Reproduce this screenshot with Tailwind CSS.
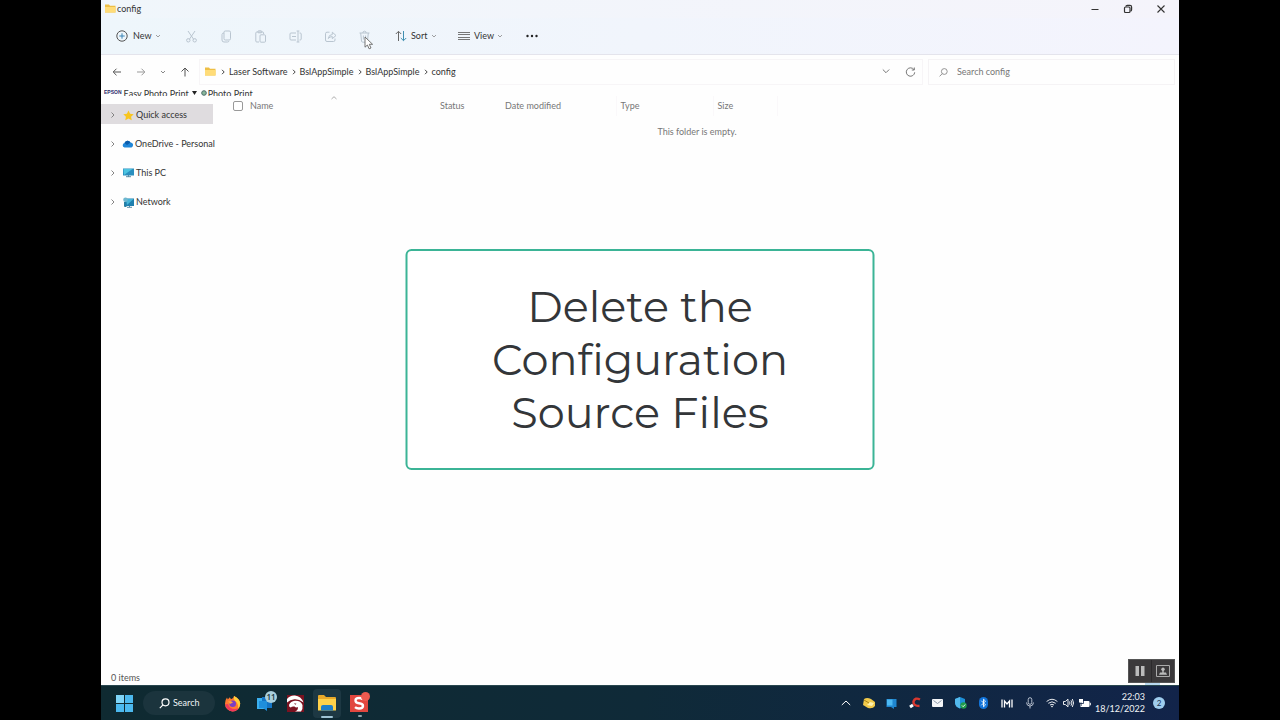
<!DOCTYPE html>
<html lang="en">
<head>
    <meta charset="UTF-8">
    <meta name="viewport" content="width=device-width, initial-scale=1.0">
    <title>config</title>
    <script src="https://cdn.jsdelivr.net/npm/@tailwindcss/browser@4"></script>
</head>
<body class="h-screen overflow-hidden bg-black px-[101px] font-['Segoe_UI','Lato',sans-serif] text-[9px] leading-3 text-[#333]">
    <div class="relative flex h-full flex-col bg-[#fefefe]">

        <!-- Title bar -->
        <header class="flex h-[18px] shrink-0 items-center bg-linear-to-r from-[#f0f6fb] to-[#f5f4fb]">
            <svg class="ml-1 h-[10px] w-[11px]" viewBox="0 0 11 10"><path d="M0 .5h4l1 1.200h5.500V8.500H0z" fill="#eebf45"/><path d="M0 3h10.500v5.500H0z" fill="#ffdc78"/></svg>
            <h1 class="ml-px">config</h1>
            <div class="mr-[2px] ml-auto flex h-full w-[99px]">
                <button class="grid flex-1 place-items-center" aria-label="Minimize"><svg class="size-[10px]" viewBox="0 0 10 10" stroke="#333"><path d="M1.500 5.500h7"/></svg></button>
                <button class="grid flex-1 place-items-center" aria-label="Restore"><svg class="size-[10px]" viewBox="0 0 10 10" fill="none" stroke="#333" stroke-width="1.200"><rect x="1.500" y="3" width="5.500" height="5.500" rx="1"/><path d="M3 2.600Q3 1.400 4.300 1.400H7Q8.600 1.400 8.600 3V5.700Q8.600 7 7.400 7"/></svg></button>
                <button class="grid flex-1 place-items-center" aria-label="Close"><svg class="size-[10px]" viewBox="0 0 10 10" stroke="#333" stroke-width="1.100"><path d="M1.500 1.500l7 7M8.500 1.500l-7 7"/></svg></button>
            </div>
        </header>

        <!-- Command bar -->
        <div class="flex h-[37px] shrink-0 items-center border-b border-[#e4e4ec] bg-linear-to-r from-[#eef6fb] to-[#f4f4fd] pl-[15px]">
            <button class="flex w-[58px] items-center">
                <svg class="size-[12px]" viewBox="0 0 12 12" fill="none" stroke="#555"><circle cx="6" cy="6" r="5.200"/><path d="M6 3.300v5.400M3.300 6h5.400" stroke="#3b84b5"/></svg>
                <span class="ml-[5px]">New</span>
                <svg class="ml-[3px] size-[6px]" viewBox="0 0 6 6" fill="none" stroke="#888" stroke-width=".8"><path d="M1 2l2 2 2-2"/></svg>
            </button>
            <div class="flex w-[208px] text-[#b9c5d0]">
                <button class="grid flex-1 place-items-center" aria-label="Cut"><svg class="size-[13px]" viewBox="0 0 13 13" fill="none" stroke="currentColor"><path d="M3 1l5.800 8.500M10 1L4.200 9.500"/><circle cx="3.300" cy="10.300" r="1.700"/><circle cx="9.700" cy="10.300" r="1.700"/></svg></button>
                <button class="grid flex-1 place-items-center" aria-label="Copy"><svg class="size-[13px]" viewBox="0 0 13 13" fill="none" stroke="currentColor"><rect x="4" y="1" width="6.500" height="9" rx="1.300"/><path d="M4 3Q2 3 2 4.500V10Q2 12 4 12H7.500Q8.600 12 9 11"/></svg></button>
                <button class="grid flex-1 place-items-center" aria-label="Paste"><svg class="size-[13px]" viewBox="0 0 13 13" fill="none" stroke="currentColor"><path d="M5 12H2.800Q1.800 12 1.800 11V3Q1.800 2 2.800 2H8.500Q9.600 2 9.600 3v1"/><rect x="3.800" y=".8" width="4" height="2" rx=".8"/><rect x="6" y="4.800" width="5.500" height="7.400" rx="1"/></svg></button>
                <button class="grid flex-1 place-items-center" aria-label="Rename"><svg class="size-[13px]" viewBox="0 0 13 13" fill="none" stroke="currentColor"><path d="M7 3H2Q1 3 1 4v5q0 1 1 1h5M10.500 3h.7q1 0 1 1v5q0 1-1 1h-.7M3 6.500h4M9 1v11M7.600 1h2.800M7.600 12h2.800"/></svg></button>
                <button class="grid flex-1 place-items-center" aria-label="Share"><svg class="size-[13px]" viewBox="0 0 13 13" fill="none" stroke="currentColor"><path d="M5.500 2.200H3q-1.500 0-1.500 1.500V10q0 1.500 1.500 1.500h6.500Q11 11.500 11 10V8.500"/><path d="M4.300 8.500Q4.700 4.700 8.300 4.500V2.200L12 5.500 8.300 8.700V6.600Q5.800 6.500 4.300 8.500z"/></svg></button>
                <button class="relative grid flex-1 place-items-center" aria-label="Delete">
                    <svg class="size-[13px]" viewBox="0 0 13 13" fill="none" stroke="currentColor"><path d="M1.500 3h10M4.800 3Q4.800 1.200 6.500 1.200T8.200 3M2.700 3l.8 8q.1 1.200 1.300 1.200h3.400q1.200 0 1.300-1.200l.8-8M5.400 5.500v4M7.600 5.500v4"/></svg>
                    <!-- mouse pointer -->
                    <svg class="absolute left-[17px] top-[6px] h-[14px] w-[10px]" viewBox="0 0 10 14"><path d="M1 1v10.200l2.400-2.200 1.700 3.800 1.900-.8-1.700-3.700h3.300z" fill="#fff" stroke="#666" stroke-width=".9"/></svg>
                </button>
            </div>
            <button class="ml-[13px] flex w-[63px] items-center">
                <svg class="size-[12px]" viewBox="0 0 12 12" fill="none"><path d="M3.500 11V1.500M.8 4l2.700-2.700L6.200 4" stroke="#666"/><path d="M8.500 1v9.500M5.800 8l2.700 2.700L11.200 8" stroke="#3f8fb0"/></svg>
                <span class="ml-1">Sort</span>
                <svg class="ml-1 size-[6px]" viewBox="0 0 6 6" fill="none" stroke="#888" stroke-width=".8"><path d="M1 2l2 2 2-2"/></svg>
            </button>
            <button class="flex w-[68px] items-center">
                <svg class="h-[10px] w-[12px]" viewBox="0 0 12 10" stroke="#777"><path d="M0 1.500h12M0 3.500h12M0 6.500h12M0 8.500h12"/></svg>
                <span class="ml-1">View</span>
                <svg class="ml-[3px] size-[6px]" viewBox="0 0 6 6" fill="none" stroke="#888" stroke-width=".8"><path d="M1 2l2 2 2-2"/></svg>
            </button>
            <button aria-label="See more"><svg class="h-[4px] w-[12px]" viewBox="0 0 12 4" fill="#222"><circle cx="1.500" cy="2" r="1.200"/><circle cx="6" cy="2" r="1.200"/><circle cx="10.500" cy="2" r="1.200"/></svg></button>
        </div>

        <!-- Address bar -->
        <div class="flex h-[34px] shrink-0 items-center pl-[10px] pr-1">
            <nav class="flex w-[88px] items-center gap-3 text-[#555]">
                <button aria-label="Back"><svg class="size-[12px]" viewBox="0 0 12 12" fill="none" stroke="currentColor"><path d="M10 6H2.500M5.500 2.700L2.200 6l3.300 3.300"/></svg></button>
                <button class="text-[#999]" aria-label="Forward"><svg class="size-[12px]" viewBox="0 0 12 12" fill="none" stroke="currentColor"><path d="M2 6h7.500M6.500 2.700L9.800 6 6.500 9.300"/></svg></button>
                <button aria-label="Recent locations"><svg class="size-[8px]" viewBox="0 0 8 8" fill="none" stroke="#888"><path d="M2 3l2 2 2-2"/></svg></button>
                <button aria-label="Up"><svg class="size-[12px]" viewBox="0 0 12 12" fill="none" stroke="currentColor"><path d="M6 10.500V2.500M2.500 5.500L6 2l3.500 3.500"/></svg></button>
            </nav>
            <div class="flex h-[26px] flex-1 items-center border border-[#f7f5f7] pl-[5px]">
                <svg class="h-[10px] w-[11px]" viewBox="0 0 11 10"><path d="M0 .5h4l1 1.200h5.500V8.500H0z" fill="#eebf45"/><path d="M0 3h10.500v5.500H0z" fill="#ffdc78"/></svg>
                <ol class="flex items-center">
                    <li class="flex items-center"><svg class="mr-[3px] ml-1 size-[6px]" viewBox="0 0 6 6" fill="none" stroke="#444"><path d="M2 .8L4.200 3 2 5.200"/></svg><a href="#">Laser Software</a></li>
                    <li class="flex items-center"><svg class="mx-[3px] size-[6px]" viewBox="0 0 6 6" fill="none" stroke="#444"><path d="M2 .8L4.200 3 2 5.200"/></svg><a href="#">BslAppSimple</a></li>
                    <li class="flex items-center"><svg class="mx-[3px] size-[6px]" viewBox="0 0 6 6" fill="none" stroke="#444"><path d="M2 .8L4.200 3 2 5.200"/></svg><a href="#">BslAppSimple</a></li>
                    <li class="flex items-center"><svg class="mx-[3px] size-[6px]" viewBox="0 0 6 6" fill="none" stroke="#444"><path d="M2 .8L4.200 3 2 5.200"/></svg><a href="#">config</a></li>
                </ol>
                <button class="ml-auto" aria-label="Previous locations"><svg class="size-[10px]" viewBox="0 0 10 10" fill="none" stroke="#777"><path d="M1.800 2.500L5 5.700l3.200-3.200"/></svg></button>
                <button class="mr-[6px] ml-[14px]" aria-label="Refresh"><svg class="size-[11px]" viewBox="0 0 11 11" fill="none" stroke="#777"><path d="M9 2.700A4.200 4.200 0 1 0 9.700 5.300M9.300 .5v2.500H6.800"/></svg></button>
            </div>
            <label class="ml-[5px] flex h-[26px] w-[247px] items-center border border-[#f5f3f5] pl-[10px]">
                <svg class="size-[9px]" viewBox="0 0 9 9" fill="none" stroke="#888" stroke-width=".9"><circle cx="5.300" cy="3.500" r="2.900"/><path d="M3.200 5.700L.6 8.400"/></svg>
                <input type="search" aria-label="Search config" placeholder="Search config" class="ml-[9px] min-w-0 flex-1 bg-transparent outline-none placeholder:text-[#777]">
            </label>
        </div>

        <!-- Epson toolbar, cut off by the pane below -->
        <div class="flex h-[7px] shrink-0 items-start overflow-hidden pl-[3px] text-[#333]">
            <span class="font-['Liberation_Sans',sans-serif] text-[5px] leading-[6px] font-bold text-[#2b2a6b]">EPSON</span>
            <button class="ml-[2px] leading-[10px]">Easy Photo Print</button>
            <svg class="ml-[3px] mt-[2px] h-[4px] w-[5px]" viewBox="0 0 5 4" fill="#222"><path d="M0 0h5L2.500 4z"/></svg>
            <svg class="ml-[4px] mt-px size-[6px]" viewBox="0 0 6 6"><circle cx="3" cy="3" r="2.300" fill="#8ab89a" stroke="#4a6a6a"/></svg>
            <button class="ml-px leading-[10px]">Photo Print</button>
        </div>

        <div class="flex flex-1">
            <!-- Navigation pane -->
            <aside class="flex w-[112px] shrink-0 flex-col gap-[9px] pt-2">
                <a href="#" class="flex h-5 items-center bg-[#dfdcdf] pt-[2px] pl-[9px] whitespace-nowrap">
                    <svg class="size-[6px] shrink-0" viewBox="0 0 6 6" fill="none" stroke="#777" stroke-width=".9"><path d="M1.500 .5L4 3 1.500 5.500"/></svg>
                    <svg class="ml-[7px] size-[11px] shrink-0" viewBox="0 0 11 11"><path d="M5.500 .4l1.600 3.300 3.600.5-2.600 2.500.6 3.600-3.200-1.700-3.200 1.700.6-3.600L.3 4.200l3.600-.5z" fill="#f8c51f"/></svg>
                    <span class="ml-[2px]">Quick access</span>
                </a>
                <a href="#" class="flex h-5 items-center pt-[2px] pl-[9px] whitespace-nowrap">
                    <svg class="size-[6px] shrink-0" viewBox="0 0 6 6" fill="none" stroke="#777" stroke-width=".9"><path d="M1.500 .5L4 3 1.500 5.500"/></svg>
                    <svg class="ml-[6px] h-[8px] w-[12px] shrink-0" viewBox="0 0 12 8"><path d="M2.500 7.500A2.300 2.300 0 0 1 2.500 3 3.300 3.300 0 0 1 8.500 2.500 2.600 2.600 0 0 1 9.500 7.500z" fill="#1f86d8"/><path d="M2.500 3A3.300 3.300 0 0 1 8.500 2.500L5 5z" fill="#0b5cab"/></svg>
                    <span class="ml-px">OneDrive - Personal</span>
                </a>
                <a href="#" class="flex h-5 items-center pt-[2px] pl-[9px] whitespace-nowrap">
                    <svg class="size-[6px] shrink-0" viewBox="0 0 6 6" fill="none" stroke="#777" stroke-width=".9"><path d="M1.500 .5L4 3 1.500 5.500"/></svg>
                    <svg class="ml-[7px] h-[10px] w-[11px] shrink-0" viewBox="0 0 11 10"><path d="M0 .5h11v7H0z" fill="#2a8fbf"/><path d="M.5 1h9L1 7z" fill="#4cc3e0"/><path d="M3 8.700h5M5.500 7v2" stroke="#5a8ca5"/></svg>
                    <span class="ml-[2px]">This PC</span>
                </a>
                <a href="#" class="flex h-5 items-center pt-[2px] pl-[9px] whitespace-nowrap">
                    <svg class="size-[6px] shrink-0" viewBox="0 0 6 6" fill="none" stroke="#777" stroke-width=".9"><path d="M1.500 .5L4 3 1.500 5.500"/></svg>
                    <svg class="ml-[7px] size-[11px] shrink-0" viewBox="0 0 11 11"><path d="M2 1.500h9v7.500H2z" fill="#1f7fae"/><path d="M3 2h7.500L4 8z" fill="#45b5d8"/><path d="M4 10.300h5M6.500 9v1" stroke="#5a8ca5"/><circle cx="2.500" cy="2.700" r="2.300" fill="#6fb7cf"/><path d="M1.500 5v4.500h2" fill="none" stroke="#2a7fa0"/></svg>
                    <span class="ml-[2px]">Network</span>
                </a>
            </aside>

            <!-- File list -->
            <main class="min-w-0 flex-1 text-[#777]">
                <table class="w-[565px] table-fixed text-left">
                    <thead>
                        <tr class="h-5">
                            <th class="relative w-[222px] pl-5 font-normal">
                                <span class="flex items-center gap-[7px]">
                                    <input type="checkbox" aria-label="Select all" class="size-[10px] appearance-none rounded-[2px] border border-[#999] bg-white">Name
                                </span>
                                <svg class="absolute left-[118px] top-0 h-[4px] w-[6px]" viewBox="0 0 6 4" fill="none" stroke="#999" stroke-width=".8"><path d="M.5 3L3 .7 5.500 3"/></svg>
                            </th>
                            <th class="w-[65px] pl-[5px] font-normal">Status</th>
                            <th class="w-[116px] pl-[5px] font-normal">Date modified</th>
                            <th class="w-[97px] border-l border-[#faf8fa] pl-1 font-normal">Type</th>
                            <th class="border-x border-[#faf8fa] pl-1 font-normal">Size</th>
                        </tr>
                    </thead>
                </table>
                <p class="mt-[10px] pl-[2px] text-center">This folder is empty.</p>
            </main>
        </div>

        <!-- Status bar -->
        <footer class="flex h-4 shrink-0 items-center pt-[2px] pl-[10px] text-[#555]">0 items</footer>

        <!-- Taskbar -->
        <div class="flex h-[35px] shrink-0 items-center border-t border-[#29474f] bg-linear-to-r from-[#0f2a31] via-[#0f2a38] to-[#12244a] pl-[15px] text-[#f0f4f6]">
            <button aria-label="Start"><svg class="size-[17px]" viewBox="0 0 17 17"><path d="M0 0h8v8H0zM9 0h8v8H9zM0 9h8v8H0zM9 9h8v8H9z" fill="#4cb9ee"/><path d="M0 0h8v8H0z" fill="#7fd5f7"/></svg></button>
            <button class="ml-[10px] flex h-6 w-[72px] items-center rounded-full bg-[#1b343d] pl-4">
                <svg class="size-[11px]" viewBox="0 0 11 11" fill="none" stroke="#fff" stroke-width="1.200"><circle cx="6.500" cy="4.300" r="3.500"/><path d="M4 6.900L.8 10.200"/></svg>
                <span class="ml-[3px]">Search</span>
            </button>
            <button class="ml-[9px]" aria-label="Firefox"><svg class="size-[17px]" viewBox="0 0 17 17"><path d="M8.500 16.500A7.700 7.700 0 0 1 1 8.500Q1 5 3 2.500l.8 2 2-2.200L7 4.200Q9.500 3.700 10 1.000 15.800 3.500 16.200 8.500A7.700 7.700 0 0 1 8.500 16.500z" fill="#ff7a30"/><path d="M10 1Q15.800 3.500 16.200 8.500q0 3-2 5.200Q14.500 8 11 6 9.500 4.500 10 1z" fill="#ffcf3a"/><path d="M1.200 9.500q1 6 7.300 7 4.200-.3 5.800-3Q6 15.500 4 9z" fill="#f0385c"/><circle cx="8.700" cy="8.800" r="3.300" fill="#7b3fc4"/><path d="M4 6.500q3-1.500 5 1L6 9z" fill="#ffa436"/></svg></button>
            <button class="relative ml-4" aria-label="Phone Link, 11 notifications">
                <svg class="h-[17px] w-[15px]" viewBox="0 0 15 17"><path d="M0 3h9v11H0z" fill="#3bb0ef"/><path d="M5 2h10v11H5z" fill="#1474c4"/><path d="M2 6h8v10L6 13H2z" fill="#1f8fdc"/></svg>
                <span class="absolute -top-[4px] left-2 grid size-[12px] place-items-center rounded-full bg-[#a9cfdd] font-['Open_Sans',sans-serif] text-[8px] font-semibold text-[#12303a]">11</span>
            </button>
            <button class="ml-[15px]" aria-label="LightBurn"><svg class="size-[17px]" viewBox="0 0 17 17"><path d="M0 0h17v17H0z" fill="#7a1220"/><path d="M0 7.500V4Q3 0 8 .5q6 .5 8.500 7Q12 4 7.500 4.300 3 4.500 0 7.500z" fill="#fff"/><path d="M2 10q1.500-4 6-4.300Q14 5.500 15.500 10q.5 4-1.500 6.500H8Q11.500 15 10.800 12 9 13 7.500 11.500 5 11 3.800 12.500 1.800 12 2 10z" fill="#fff"/><path d="M7 8.300l2.500.4-1.200 1z" fill="#7a1220"/></svg></button>
            <button class="relative ml-[9px] grid h-[29px] w-[28px] place-items-center rounded-sm bg-[#1d3843]" aria-label="File Explorer">
                <svg class="h-[16px] w-[18px]" viewBox="0 0 18 16"><path d="M0 1q0-1 1-1h5l2 2h9q1 0 1 1v12H0z" fill="#e8a92a"/><path d="M0 4h18v11.500H0z" fill="#ffd24a"/><path d="M3 15.500V12q0-2 2-2h8q2 0 2 2v3.500z" fill="#1f7fc8"/></svg>
                <span class="absolute bottom-0 left-2 h-[2px] w-[12px] rounded-full bg-[#9fc3d4]"></span>
            </button>
            <button class="relative ml-[9px]" aria-label="Snagit">
                <svg class="h-[19px] w-[19px]" viewBox="0 0 19 19"><path d="M0 1h18v17H0z" fill="#e2473f"/><path d="M13 5.200Q11.500 4 9 4 5.500 4 5.500 6.500T9 9.300q4 .3 4 2.700t-4 2.500q-2.500 0-4-1.300" fill="none" stroke="#fff" stroke-width="2.400"/></svg>
                <span class="absolute -top-[2px] left-[11px] size-[9px] rounded-full bg-[#ee5a50]"></span>
                <span class="absolute -bottom-[4px] left-[8px] h-[2px] w-[4px] rounded-full bg-[#8fa4ac]"></span>
            </button>

            <div class="ml-auto flex w-[207px] items-center">
                <button class="grid flex-1 place-items-center" aria-label="Show hidden icons"><svg class="size-[10px]" viewBox="0 0 10 10" fill="none" stroke="#fff"><path d="M.8 7L5 3l4.200 4"/></svg></button>
                <span class="grid flex-1 place-items-center"><svg class="size-[12px]" viewBox="0 0 12 12"><path d="M1 2q3-2 7 0l4 3v4q-2 3-7 2L0 8z" fill="#f0c94a"/><path d="M4 8l3-3 4 1-2 3z" fill="#fff2b0"/><path d="M1 3l5 3" stroke="#a88416"/></svg></span>
                <span class="grid flex-1 place-items-center"><svg class="size-[11px]" viewBox="0 0 11 11"><path d="M.5 1h10v8H8v2L5 9H.5z" fill="#1f86d0"/><path d="M1 1.500h5.500v6H1z" fill="#4db9f2"/></svg></span>
                <span class="grid flex-1 place-items-center"><svg class="size-[12px]" viewBox="0 0 12 12" fill="none"><path d="M11 2.500Q6 0 4.500 4.500 4 9 10.500 9" stroke="#d9382f" stroke-width="2.400"/><path d="M1 10L4 8" stroke="#fff" stroke-width="3"/></svg></span>
                <span class="grid flex-1 place-items-center"><svg class="h-[8px] w-[11px]" viewBox="0 0 11 8"><rect width="11" height="8" rx="1" fill="#f4f6f8"/><path d="M1.500 1.500l4 3 4-3" fill="none" stroke="#8b98a8"/></svg></span>
                <span class="grid flex-1 place-items-center"><svg class="size-[12px]" viewBox="0 0 12 12"><path d="M5 0l5 2v4q-.5 4-5 5.500Q.500 10 0 6V2z" fill="#1e90d8"/><path d="M5 0v11.500Q.500 10 0 6V2z" fill="#53b9ec"/><circle cx="8.500" cy="8.500" r="3.200" fill="#1f9a4c"/><path d="M7 8.500l1.200 1.200L10.200 7.500" fill="none" stroke="#fff" stroke-width=".9"/></svg></span>
                <span class="grid flex-1 place-items-center"><svg class="h-[12px] w-[9px]" viewBox="0 0 9 12"><rect width="9" height="12" rx="4.500" fill="#1273d8"/><path d="M2.300 3.700l4.200 4.200-2 1.900V2.200l2 1.900-4.200 4.200" fill="none" stroke="#fff" stroke-width=".9"/></svg></span>
                <span class="grid flex-1 place-items-center"><svg class="h-[9px] w-[12px]" viewBox="0 0 12 9" fill="none" stroke="#fff" stroke-width="1.300"><path d="M1 .5v8M3.500 8.500V2l2.500 3 2.500-3v6.500M11 .5v8"/></svg></span>
                <span class="grid flex-1 place-items-center"><svg class="size-[12px]" viewBox="0 0 12 12" fill="none" stroke="#c8d0dc" stroke-width=".9"><rect x="4.200" y=".7" width="3.600" height="6.600" rx="1.800"/><path d="M2.500 5.500Q2.700 9 6 9t3.500-3.500M6 9v2.500"/></svg></span>
            </div>
            <button class="ml-[5px] flex w-[46px] items-center gap-[5px]" aria-label="Network, volume and battery">
                <svg class="h-[10px] w-[12px] shrink-0" viewBox="0 0 12 10" fill="none" stroke="#fff" stroke-width=".9"><path d="M.6 3.500Q6-1 11.400 3.500M2.300 5.300q3.700-3 7.400 0M4 7q2-1.500 4 0"/><circle cx="6" cy="8.500" r=".5"/></svg>
                <svg class="h-[10px] w-[11px] shrink-0" viewBox="0 0 11 10" fill="none" stroke="#fff" stroke-width=".9"><path d="M.5 3.500h1.800L5 1.200v7.600L2.300 6.500H.5zM6.500 3.500q1 1.500 0 3M8 2.300q1.900 2.700 0 5.400M9.300 1q2.600 4 0 8"/></svg>
                <svg class="h-[9px] w-[12px] shrink-0" viewBox="0 0 12 9"><rect x="3" y="2" width="7.500" height="6" rx="1" fill="#fff"/><path d="M11.300 3.800v2.500" stroke="#fff"/><path d="M0 0h4v3.500H0zM1.500 3h1v4H4v1H1.500z" fill="#fff"/><path d="M4.500 .5v4H1" fill="none" stroke="#12264a" stroke-width=".8"/></svg>
            </button>
            <button class="ml-[3px] w-[50px] text-right leading-[12px] whitespace-nowrap"><time datetime="2022-12-18T22:03">22:03<br>18/12/2022</time></button>
            <button class="mr-[14px] ml-2 grid size-[12px] shrink-0 place-items-center rounded-full bg-[#9fcdee] text-[8px] text-[#14304e]">2</button>
        </div>

        <!-- Recorder controls -->
        <div class="absolute right-[19px] bottom-[35px] h-[3px] w-[15px] bg-[#b9d9f0]"></div>
        <div class="absolute right-1 bottom-[37px] flex h-6 w-[47px] border border-[#555] bg-[#3b393b]">
            <button class="grid flex-1 place-items-center border-r border-[#2c2a2c]" aria-label="Pause"><svg class="size-[12px]" viewBox="0 0 12 12" fill="#bbb"><path d="M1.500 1h3.500v10H1.500zM7 1h3.500v10H7z"/></svg></button>
            <button class="grid flex-1 place-items-center" aria-label="Webcam"><svg class="h-[12px] w-[14px]" viewBox="0 0 14 12" fill="#bbb"><path d="M.5 .5h13v11H.5z" fill="none" stroke="#aaa"/><circle cx="7" cy="4.300" r="1.700"/><path d="M6.300 5h1.400v2.500h2.300l1 2.200H3l1-2.200h2.300z"/></svg></button>
        </div>

        <!-- Caption -->
        <div class="absolute top-[249px] left-1/2 flex h-[221px] w-[469px] -translate-x-1/2 items-center justify-center rounded-md border-2 border-[#3bb496] bg-white">
            <p class="text-center font-['Montserrat',sans-serif] text-[43px] leading-[53px] text-[#333639] [font-variant-ligatures:none]">Delete the<br>Configuration<br>Source Files</p>
        </div>
    </div>
</body>
</html>
